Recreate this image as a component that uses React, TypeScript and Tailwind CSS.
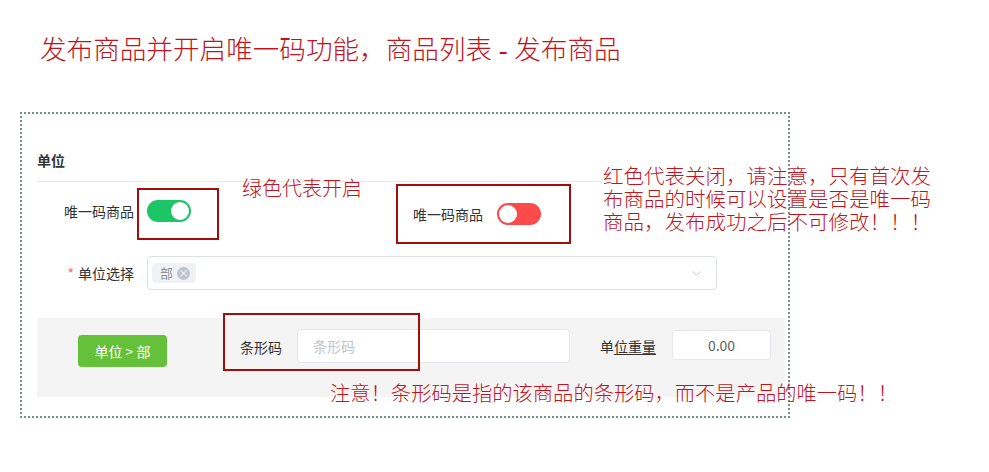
import React from "react";
import { ChevronDown } from "lucide-react";

const ui = { fontFamily: '"Noto Sans CJK SC", "Liberation Sans", sans-serif' };
const note = { fontFamily: '"Liberation Serif", "Noto Sans CJK SC", serif' };

function Toggle({ on }: { on: boolean }) {
  return (
    <div
      className={`flex h-[22px] w-[44px] items-center rounded-full px-[2px] ${
        on ? "justify-end bg-[#1cc566]" : "justify-start bg-[#fd4a4a]"
      }`}
    >
      <div className="h-[18px] w-[18px] rounded-full bg-white" />
    </div>
  );
}

export default function App() {
  return (
    <div className="relative h-[472px] w-[989px] overflow-hidden bg-white" style={ui}>
      <div className="pl-[40px] pt-[34px] text-[26.6px] font-light leading-[32px] text-[#c1141d]" style={note}>
        发布商品并开启唯一码功能，商品列表 - 发布商品
      </div>

      <div className="ml-[20px] mt-[46px] h-[306px] w-[770px] border-2 border-dotted border-[#768c8c] pl-[15px] pt-[36px]">
        <div className="text-[14px] font-bold leading-[20px] text-[#333]">单位</div>
        <div className="mt-[11px] h-px w-[563px] bg-[#e4e7ed]" />

        <div className="mt-[18px] flex items-center">
          <div className="w-[110px] pr-[13px] text-right text-[14px] text-[#333]">唯一码商品</div>
          <Toggle on />
        </div>

        <div className="mt-[34px] flex items-center">
          <div className="w-[110px] pr-[13px] text-right text-[14px] text-[#333]">
            <span className="mr-[4px] text-[#f56c6c]">*</span>单位选择
          </div>
          <div className="flex h-[34px] w-[570px] items-center justify-between rounded-[4px] border border-[#dcdfe6] pl-[4px] pr-[12px]">
            <div className="flex h-[20px] w-[44px] items-center gap-[4px] rounded-[4px] bg-[#f0f2f5] pl-[8px] text-[13px] text-[#909399]">
              部
              <span className="flex h-[13px] w-[13px] items-center justify-center rounded-full bg-[#c0c4cc] text-[10px] leading-none text-white">
                ×
              </span>
            </div>
            <ChevronDown size={15} strokeWidth={1.5} className="text-[#c0c4cc]" />
          </div>
        </div>

        <div className="mt-[28px] flex h-[79px] w-[748px] items-start bg-[#f4f4f4]">
          <div className="ml-[41px] mt-[17px] flex h-[32px] w-[89px] items-center justify-center rounded-[4px] bg-[#66c13a] text-[14px] text-white">
            单位 &gt; 部
          </div>
          <div className="ml-[73px] mt-[18px] text-[14px] leading-[22px] text-[#333]">条形码</div>
          <div className="ml-[15px] mt-[11px] flex h-[34px] w-[273px] items-center rounded-[4px] border border-[#e4e7ed] bg-white pl-[15px] text-[14px] text-[#c0c4cc]">
            条形码
          </div>
          <div className="ml-[30px] mt-[17px] text-[14px] leading-[22px] text-[#333]">
            单<span className="underline underline-offset-2">位重量</span>
          </div>
          <div className="ml-[16px] mt-[12px] flex h-[30px] w-[99px] items-center justify-center rounded-[4px] border border-[#e4e7ed] bg-white text-[14px] text-[#606266]">
            0.00
          </div>
        </div>
      </div>

      {/* annotations */}
      <div className="absolute left-[137px] top-[188px] h-[52px] w-[82px] border-2 border-[#a50d0d]" />
      <div className="absolute left-[242px] top-[177px] text-[20px] font-light leading-[24px] text-[#c1141d]" style={note}>
        绿色代表开启
      </div>

      <div className="absolute left-[383px] top-[184px] h-[72px] w-[197px] bg-white">
        <div className="ml-[13px] flex h-[60px] w-[175px] items-center border-2 border-[#a50d0d] pl-[15px]">
          <span className="text-[14px] text-[#333]">唯一码商品</span>
          <div className="ml-[14px]">
            <Toggle on={false} />
          </div>
        </div>
      </div>

      <div className="absolute left-[603px] top-[166px] w-[340px] text-[20.5px] font-light leading-[23px] text-[#c1141d]" style={note}>
        红色代表关闭，请注意，只有首次发
        <br />
        布商品的时候可以设置是否是唯一码
        <br />
        商品，发布成功之后不可修改！！！
      </div>

      <div className="absolute left-[223px] top-[313px] h-[58px] w-[197px] border-2 border-[#a50d0d]" />
      <div className="absolute left-[330px] top-[382px] whitespace-nowrap text-[20.3px] font-light leading-[24px] text-[#c1141d]" style={note}>
        注意！条形码是指的该商品的条形码，而不是产品的唯一码！！
      </div>
    </div>
  );
}
